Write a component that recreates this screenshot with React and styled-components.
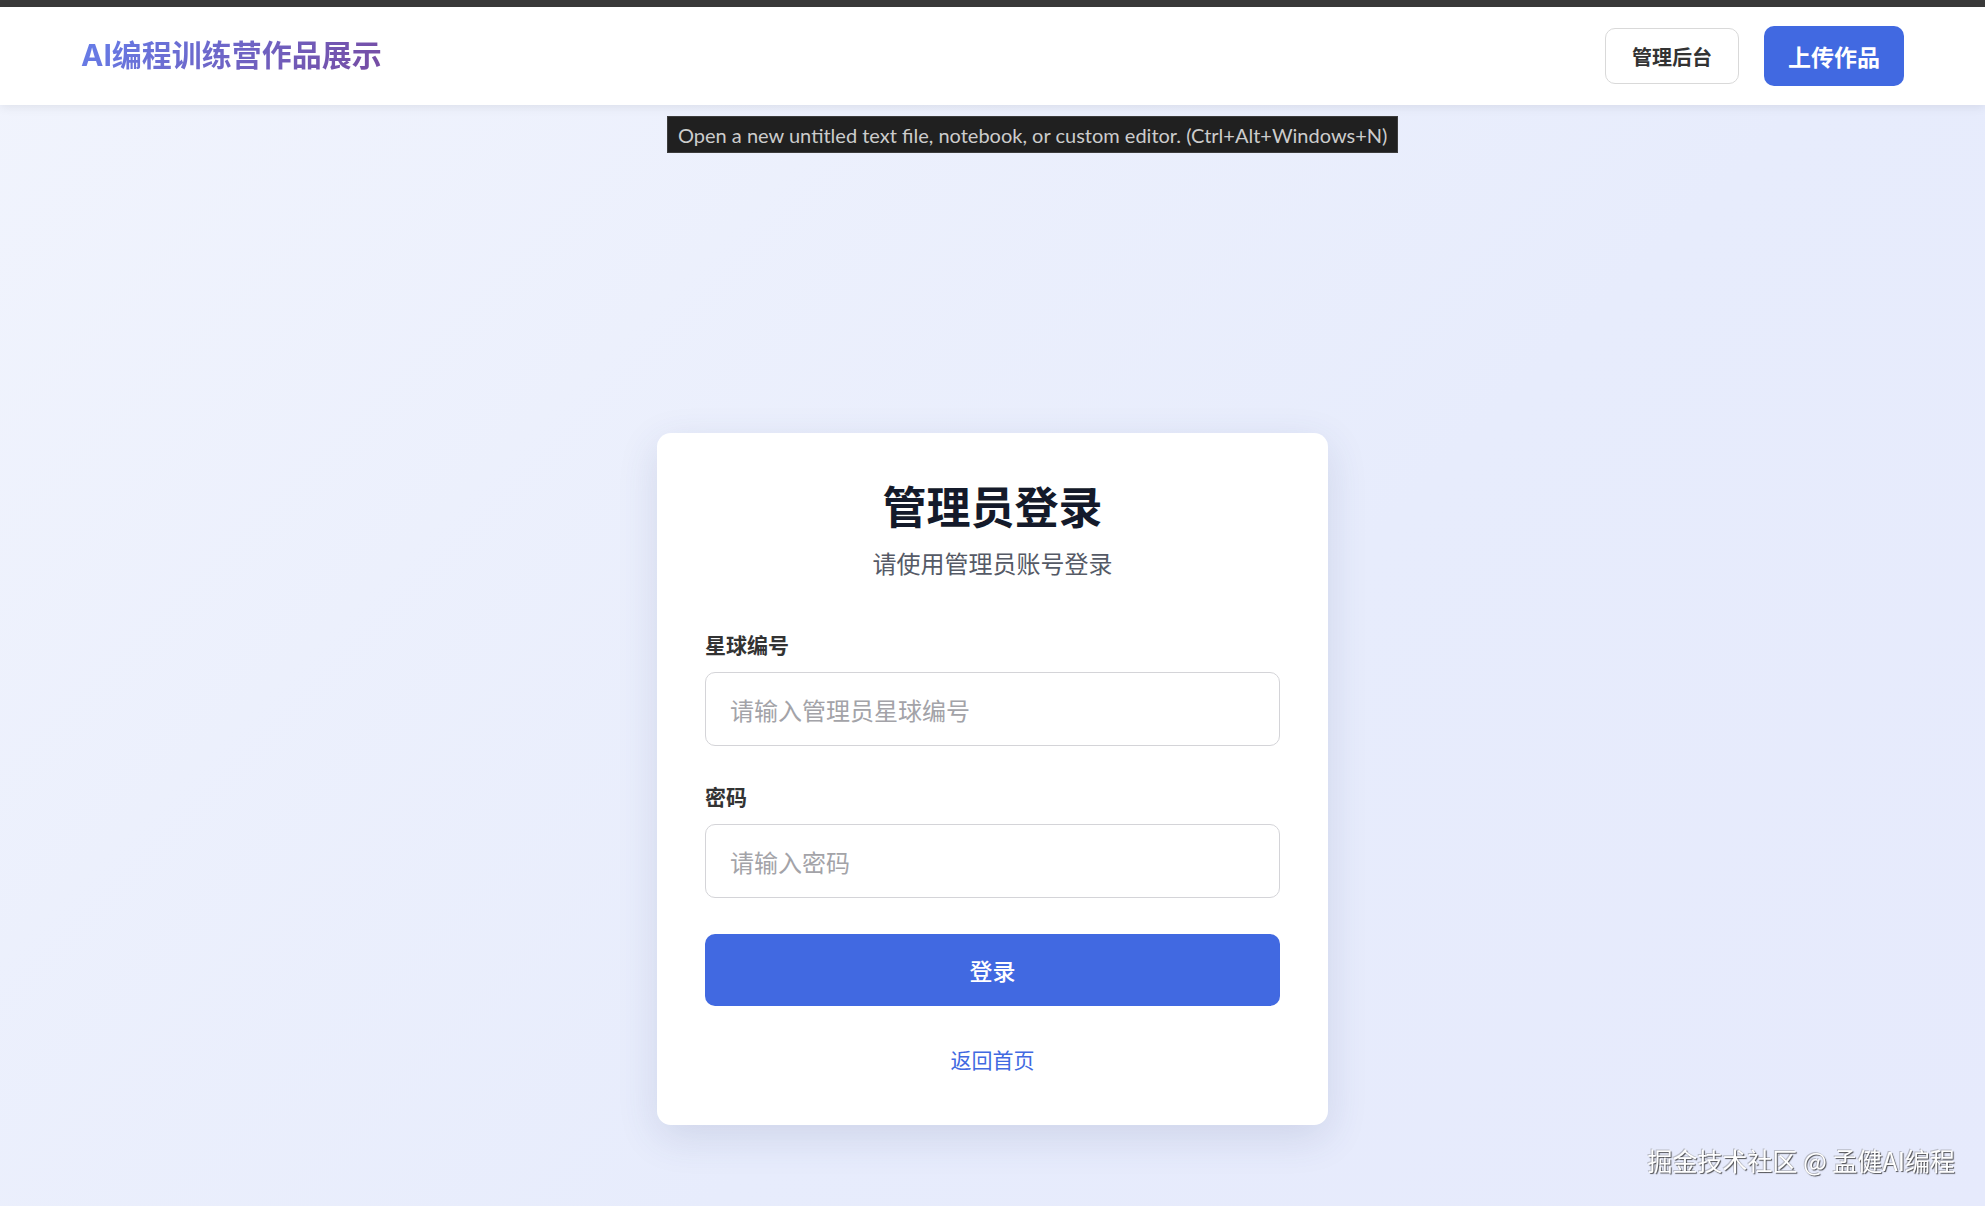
import React from "react";
import styled, { createGlobalStyle } from "styled-components";

const GlobalStyle = createGlobalStyle`
    * { box-sizing: border-box; }
    body {
        margin: 0;
        font-family: "Inter", "Noto Sans CJK SC", sans-serif;
        background: linear-gradient(135deg, #f1f4fd 0%, #e7ecfc 60%, #e6eafc 100%);
        min-height: 100vh;
    }
`

const Page = styled.div`
    min-height: 100vh;
    display: flex;
    flex-direction: column;
    position: relative;
`

const TopStrip = styled.div`
    height: 7px;
    background: #3a3a3a;
`

const Header = styled.header`
    height: 98px;
    background: #ffffff;
    display: flex;
    align-items: center;
    justify-content: space-between;
    padding: 0 81px;
    box-shadow: 0 2px 10px rgba(0, 0, 0, 0.08);
    position: relative;
    z-index: 2;
`

const Logo = styled.span`
    font-size: 30px;
    line-height: 36px;
    margin-top: -3px;
    font-weight: 700;
    background: linear-gradient(135deg, #667eea 0%, #764ba2 100%);
    -webkit-background-clip: text;
    background-clip: text;
    color: transparent;
`

const Nav = styled.div`
    display: flex;
    align-items: center;
    gap: 25px;
`

const NavButton = styled.button`
    font-family: "Noto Sans CJK SC", sans-serif;
    border-radius: 10px;
    cursor: pointer;
    display: flex;
    align-items: center;
    justify-content: center;
    height: ${p => (p.$primary ? "60px" : "56px")};
    padding: ${p => (p.$primary ? "0 24px" : "0 26px")};
    font-size: ${p => (p.$primary ? "23px" : "20px")};
    font-weight: ${p => (p.$primary ? 700 : 600)};
    color: ${p => (p.$primary ? "#ffffff" : "#333333")};
    background: ${p => (p.$primary ? "#4169e1" : "#ffffff")};
    border: ${p => (p.$primary ? "none" : "1px solid #d9d9d9")};
`

const Tooltip = styled.div`
    position: absolute;
    top: 116px;
    left: 667px;
    height: 37px;
    padding: 0 10px;
    display: flex;
    align-items: center;
    background: #202020;
    border: 1px solid #3c3c3c;
    color: #cccccc;
    font-family: "Lato", "Noto Sans", sans-serif;
    font-size: 20px;
    white-space: nowrap;
    z-index: 5;
`

const Main = styled.main`
    flex: 1;
    display: flex;
    justify-content: center;
    align-items: flex-start;
    padding: 328px 0 81px;
`

const Card = styled.div`
    width: 671px;
    background: #ffffff;
    border-radius: 14px;
    padding: 46px 48px 50px;
    box-shadow: 0 12px 40px rgba(60, 70, 120, 0.14);
    display: flex;
    flex-direction: column;
`

const Title = styled.h1`
    margin: 0;
    text-align: center;
    font-family: "Noto Sans CJK SC", sans-serif;
    font-size: 44px;
    line-height: 53px;
    font-weight: 700;
    color: #141a2a;
`

const Subtitle = styled.p`
    margin: 13px 0 48px;
    text-align: center;
    font-family: "Noto Sans CJK SC", sans-serif;
    font-size: 24px;
    line-height: 36px;
    color: #555a66;
`

const Field = styled.div`
    display: flex;
    flex-direction: column;
    gap: 13px;
    margin-bottom: ${p => p.$gap || "35px"};
`

const Label = styled.label`
    font-family: "Noto Sans CJK SC", sans-serif;
    font-size: 21px;
    line-height: 30px;
    font-weight: 600;
    color: #333333;
`

const Input = styled.input`
    height: 74px;
    width: 100%;
    border: 1px solid #d4d4d8;
    border-radius: 10px;
    padding: 0 24px;
    font-family: "Noto Sans CJK SC", sans-serif;
    font-size: 24px;
    color: #333;
    outline: none;
    background: #ffffff;

    &::placeholder {
        color: #a3a3a8;
    }
`

const SubmitButton = styled.button`
    height: 72px;
    width: 100%;
    border: none;
    border-radius: 10px;
    background: #4169e1;
    color: #ffffff;
    font-family: "Noto Sans CJK SC", sans-serif;
    font-size: 23px;
    font-weight: 500;
    cursor: pointer;
`

const BackLink = styled.a`
    margin-top: 38px;
    text-align: center;
    font-family: "Noto Sans CJK SC", sans-serif;
    font-size: 21px;
    line-height: 31px;
    color: #4169e1;
    text-decoration: none;
`

const Watermark = styled.div`
    position: fixed;
    right: 30px;
    bottom: 28px;
    font-family: "Noto Sans CJK SC", sans-serif;
    font-size: 25px;
    color: #ffffff;
    text-shadow: 1px 1px 1px rgba(40, 40, 40, 0.8), -1px -1px 0 rgba(120, 120, 120, 0.4);
`

export default function App() {
    return (
        <Page>
            <GlobalStyle />
            <TopStrip />
            <Header>
                <Logo>AI编程训练营作品展示</Logo>
                <Nav>
                    <NavButton>管理后台</NavButton>
                    <NavButton $primary>上传作品</NavButton>
                </Nav>
            </Header>
            <Tooltip>Open a new untitled text file, notebook, or custom editor. (Ctrl+Alt+Windows+N)</Tooltip>
            <Main>
                <Card>
                    <Title>管理员登录</Title>
                    <Subtitle>请使用管理员账号登录</Subtitle>
                    <Field>
                        <Label>星球编号</Label>
                        <Input placeholder="请输入管理员星球编号" />
                    </Field>
                    <Field $gap="36px">
                        <Label>密码</Label>
                        <Input type="password" placeholder="请输入密码" />
                    </Field>
                    <SubmitButton>登录</SubmitButton>
                    <BackLink href="#">返回首页</BackLink>
                </Card>
            </Main>
            <Watermark>掘金技术社区 @ 孟健AI编程</Watermark>
        </Page>
    )
}
